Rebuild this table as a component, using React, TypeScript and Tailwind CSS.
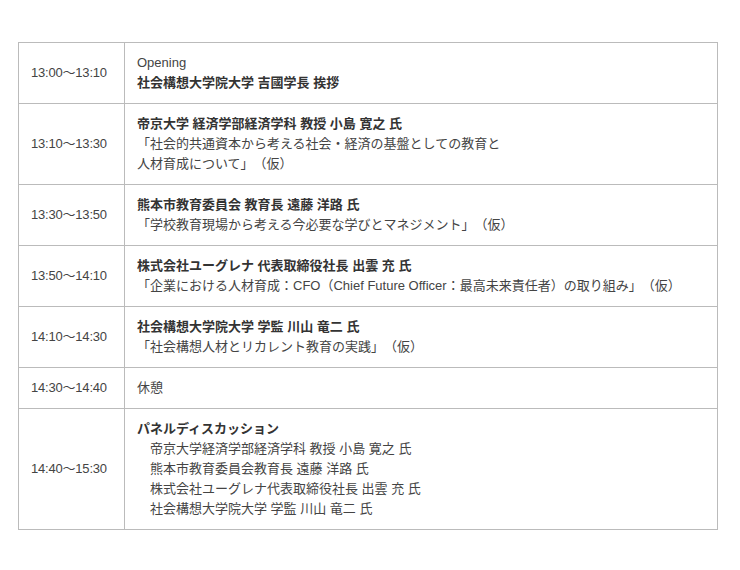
const rows: { time: string; lines: { text: string; bold?: boolean }[] }[] = [
  {
    time: '13:00〜13:10',
    lines: [{ text: 'Opening' }, { text: '社会構想大学院大学 吉國学長 挨拶', bold: true }],
  },
  {
    time: '13:10〜13:30',
    lines: [
      { text: '帝京大学 経済学部経済学科 教授 小島 寛之 氏', bold: true },
      { text: '「社会的共通資本から考える社会・経済の基盤としての教育と' },
      { text: '人材育成について」（仮）' },
    ],
  },
  {
    time: '13:30〜13:50',
    lines: [
      { text: '熊本市教育委員会 教育長 遠藤 洋路 氏', bold: true },
      { text: '「学校教育現場から考える今必要な学びとマネジメント」（仮）' },
    ],
  },
  {
    time: '13:50〜14:10',
    lines: [
      { text: '株式会社ユーグレナ 代表取締役社長 出雲 充 氏', bold: true },
      { text: '「企業における人材育成：CFO（Chief Future Officer：最高未来責任者）の取り組み」（仮）' },
    ],
  },
  {
    time: '14:10〜14:30',
    lines: [
      { text: '社会構想大学院大学 学監 川山 竜二 氏', bold: true },
      { text: '「社会構想人材とリカレント教育の実践」（仮）' },
    ],
  },
  {
    time: '14:30〜14:40',
    lines: [{ text: '休憩' }],
  },
  {
    time: '14:40〜15:30',
    lines: [
      { text: 'パネルディスカッション', bold: true },
      { text: '　帝京大学経済学部経済学科 教授 小島 寛之 氏' },
      { text: '　熊本市教育委員会教育長 遠藤 洋路 氏' },
      { text: '　株式会社ユーグレナ代表取締役社長 出雲 充 氏' },
      { text: '　社会構想大学院大学 学監 川山 竜二 氏' },
    ],
  },
];

export default function App() {
  return (
    <div className="min-h-[570px] bg-white pt-[42px] pl-[18px] font-['Liberation_Sans','Noto_Sans_CJK_JP',sans-serif] text-[13px] leading-5 text-[#444] [text-spacing-trim:space-all]">
      <table className="w-[700px] border-collapse border border-[#bbb]">
        <tbody>
          {rows.map((r) => (
            <tr key={r.time} className="border-b border-[#bbb]">
              <td className="w-[106px] border-r border-[#bbb] px-3 py-[10px] align-middle whitespace-nowrap tracking-[-0.2px]">
                {r.time}
              </td>
              <td className="px-3 py-[10px] align-middle">
                {r.lines.map((l, i) => (
                  <div key={i} className={l.bold ? 'font-bold text-[#333] whitespace-pre' : 'whitespace-pre'}>
                    {l.text}
                  </div>
                ))}
              </td>
            </tr>
          ))}
        </tbody>
      </table>
    </div>
  );
}
